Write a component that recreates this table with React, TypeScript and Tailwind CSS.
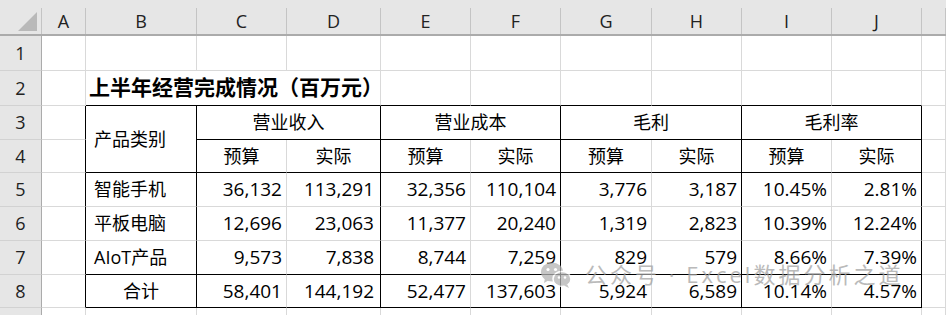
import clsx from "clsx";
import type { ReactNode } from "react";

const LETTERS = ["A", "B", "C", "D", "E", "F", "G", "H", "I", "J", ""];

const GROUPS = ["营业收入", "营业成本", "毛利", "毛利率"];

const ROWS = [
  ["智能手机", "36,132", "113,291", "32,356", "110,104", "3,776", "3,187", "10.45%", "2.81%"],
  ["平板电脑", "12,696", "23,063", "11,377", "20,240", "1,319", "2,823", "10.39%", "12.24%"],
  ["AIoT产品", "9,573", "7,838", "8,744", "7,259", "829", "579", "8.66%", "7.39%"],
  ["合计", "58,401", "144,192", "52,477", "137,603", "5,924", "6,589", "10.14%", "4.57%"],
];

function Cell({ className, children }: { className?: string; children?: ReactNode }) {
  return (
    <div
      className={clsx(
        "flex items-center whitespace-nowrap border-r border-b border-r-[#d9d9d9] border-b-[#d9d9d9]",
        className
      )}
    >
      {children}
    </div>
  );
}

function RowHead({ n }: { n: number | string }) {
  return (
    <div className="flex items-center justify-center bg-[#e6e6e6] border-r border-b border-r-[#ababab] border-b-[#d2d2d2] text-[#222]">
      {n}
    </div>
  );
}

function WeChatIcon() {
  return (
    <svg width="32" height="28" viewBox="0 0 32 28">
      <ellipse cx="12" cy="11" rx="11" ry="9.5" fill="#b3b3b3" />
      <path d="M5 17 L4 22 L9 19 Z" fill="#b3b3b3" />
      <circle cx="8" cy="8.5" r="1.6" fill="#fff" />
      <circle cx="15.5" cy="8.5" r="1.6" fill="#fff" />
      <ellipse cx="22" cy="18" rx="9" ry="7.5" fill="#b3b3b3" stroke="#fff" strokeWidth="1.5" />
      <path d="M27 23 L29 27 L24 24.5 Z" fill="#b3b3b3" />
      <circle cx="19" cy="16.5" r="1.3" fill="#fff" />
      <circle cx="25" cy="16.5" r="1.3" fill="#fff" />
    </svg>
  );
}

export default function App() {
  return (
    <div
      className="relative h-[315px] w-[946px] overflow-hidden bg-white text-[18px] text-black"
      style={{ fontFamily: '"Open Sans", "Noto Sans CJK SC", sans-serif' }}
    >
      <div className="grid grid-cols-[42px_44px_111px_90px_94px_90px_90px_91px_90px_90px_90px_24px] grid-rows-[36px_35px_35px_34px_33px_34px_34px_34px_33px_8px]">
        {/* Column headers */}
        <div className="flex items-end bg-[#e6e6e6] border-b-2 border-b-[#ababab]">
          <div className="relative h-[26px] w-full border-r border-r-[#c4c4c4]">
            <svg className="absolute right-[4px] bottom-[3px]" width="19" height="19" viewBox="0 0 19 19">
              <polygon points="19,0 19,19 0,19" fill="#b9b9b9" />
            </svg>
          </div>
        </div>
        {LETTERS.map((l, i) => (
          <div key={i} className="flex items-end bg-[#e6e6e6] border-b-2 border-b-[#ababab]">
            <div className="flex h-[26px] w-full items-center justify-center border-r border-r-[#c4c4c4] text-[#222]">
              {l}
            </div>
          </div>
        ))}

        {/* Row 1 */}
        <RowHead n={1} />
        {LETTERS.map((_, i) => (
          <Cell key={i} />
        ))}

        {/* Row 2: title */}
        <RowHead n={2} />
        <Cell />
        <Cell className="col-span-3 border-b-black pl-[3px] font-bold text-[21px]">
          上半年经营完成情况（百万元）
        </Cell>
        {[0, 1, 2, 3, 4, 5].map((i) => (
          <Cell key={i} className="border-b-black" />
        ))}
        <Cell />

        {/* Row 3: group headers */}
        <RowHead n={3} />
        <Cell className="border-r-black" />
        <Cell className="row-span-2 border-r-black border-b-black pl-[8px]">产品类别</Cell>
        {GROUPS.map((g) => (
          <Cell key={g} className="col-span-2 justify-center border-r-black border-b-black">
            {g}
          </Cell>
        ))}
        <Cell />

        {/* Row 4: sub headers */}
        <RowHead n={4} />
        <Cell className="border-r-black" />
        {GROUPS.map((g) => [
          <Cell key={g + "a"} className="justify-center border-b-black">
            预算
          </Cell>,
          <Cell key={g + "b"} className="justify-center border-r-black border-b-black">
            实际
          </Cell>,
        ])}
        <Cell />

        {/* Data rows */}
        {ROWS.map((r, ri) => {
          const last = ri === ROWS.length - 1;
          return [
            <RowHead key={"h" + ri} n={ri + 5} />,
            <Cell key={"a" + ri} className="border-r-black" />,
            <Cell
              key={"b" + ri}
              className={clsx(
                "border-r-black",
                last ? "justify-center border-b-black" : "pl-[8px]",
                ri === 2 && "border-b-black"
              )}
            >
              {r[0]}
            </Cell>,
            ...r.slice(1).map((v, ci) => (
              <Cell
                key={ri + "-" + ci}
                className={clsx(
                  "justify-end text-[19px]",
                  ci === 1 ? "pr-[6px]" : "pr-[4px]",
                  ci % 2 === 1 && "border-r-black",
                  (last || ri === 2) && "border-b-black"
                )}
              >
                {v}
              </Cell>
            )),
            <Cell key={"k" + ri} />,
          ];
        })}

        {/* Row 9 (cut off) */}
        <RowHead n="" />
        {LETTERS.map((_, i) => (
          <Cell key={i} />
        ))}
      </div>

      {/* Watermark */}
      <div className="absolute left-[540px] top-[258px] flex items-center gap-[13px] opacity-75">
        <WeChatIcon />
        <span className="text-[22px] tracking-[3px] text-[#a3a3a3]">公众号 · Excel数据分析之道</span>
      </div>
    </div>
  );
}
